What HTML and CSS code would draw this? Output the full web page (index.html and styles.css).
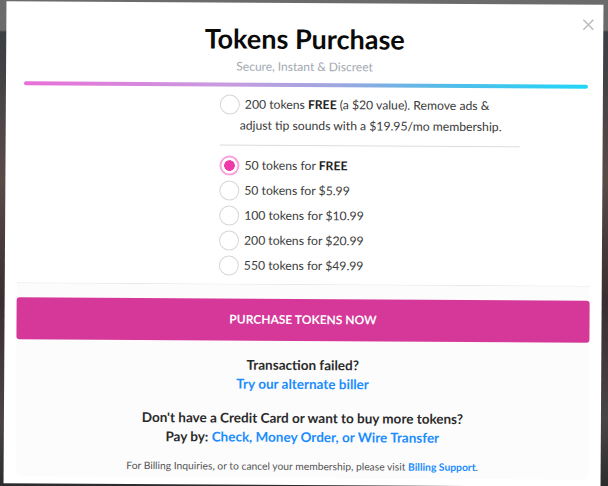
FILE: index.html
```html
<!DOCTYPE html>
<html lang="en">
<head>
<meta charset="utf-8">
<title>Tokens Purchase</title>
<link rel="stylesheet" href="styles.css">
</head>
<body>
<div class="modal">
  <button class="close" aria-label="Close">
    <svg width="12" height="12" viewBox="0 0 12 12"><path d="M1 1L11 11M11 1L1 11" stroke="#bdbdbd" stroke-width="1.6" fill="none"/></svg>
  </button>
  <h1 class="title">Tokens Purchase</h1>
  <p class="subtitle">Secure, Instant &amp; Discreet</p>
  <div class="bar"></div>

  <div class="options">
    <label class="member"><span class="radio"></span><span>200 tokens <b>FREE</b> (a $20 value). Remove ads &amp;</span><br><span>adjust tip sounds with a $19.95/mo membership.</span></label>
    <div class="divider"></div>
    <label class="opt"><span class="radio on"></span><span>50 tokens for <b>FREE</b></span></label>
    <label class="opt"><span class="radio"></span><span>50 tokens for $5.99</span></label>
    <label class="opt"><span class="radio"></span><span>100 tokens for $10.99</span></label>
    <label class="opt"><span class="radio"></span><span>200 tokens for $20.99</span></label>
    <label class="opt"><span class="radio"></span><span>550 tokens for $49.99</span></label>
  </div>

  <div class="panel">
    <button class="buy">PURCHASE TOKENS NOW</button>
    <p class="info">Transaction failed?<br><a href="#">Try our alternate biller</a></p>
    <p class="info">Don't have a Credit Card or want to buy more tokens?<br>Pay by: <a href="#">Check, Money Order, or Wire Transfer</a></p>
    <p class="foot">For Billing Inquiries, or to cancel your membership, please visit <a href="#">Billing Support</a>.</p>
  </div>
</div>
</body>
</html>
```
FILE: styles.css
```css
html, body {
  margin: 0;
  padding: 0;
}
body {
  width: 608px;
  height: 486px;
  overflow: hidden;
  background: linear-gradient(180deg, #6b6b6b 0px, #6b6b6b 30px, #3b3f44 32px, #5a4a48 180px, #3a2e30 300px, #4a4448 420px, #2c2c2e 486px);
  font-family: Lato, "Open Sans", sans-serif;
  color: #333;
}
.modal {
  position: relative;
  box-sizing: border-box;
  width: 597px;
  height: 482px;
  margin: 3px 0 0 5px;
  padding: 16px 12px 0;
  background: #fff;
  transform: rotate(0.35deg);
  transform-origin: 50% 50%;
}
.close {
  position: absolute;
  top: 14px;
  right: 9px;
  padding: 0;
  border: 0;
  background: none;
  line-height: 0;
}
.title {
  margin: 3px 0 0;
  font-size: 27px;
  line-height: 34px;
  font-weight: 700;
  text-align: center;
  color: #0a0a0a;
}
.subtitle {
  margin: 3px 0 0;
  font-size: 12px;
  line-height: 16px;
  text-align: center;
  color: #a3a8b0;
}
.bar {
  height: 4px;
  margin: 8px 3px 0 6px;
  border-radius: 2px;
  background: linear-gradient(90deg, #e96fd8 0%, #c99be0 35%, #9fa6e0 55%, #5ab9e6 72%, #1fd6f9 100%);
}
.options {
  width: 300px;
  margin: 8px 0 0 202px;
  font-size: 12.2px;
  line-height: 20px;
  color: #3a3a3a;
}
.options b {
  color: #222;
}
.member {
  display: block;
  padding-left: 20px;
}
.member .radio {
  margin-left: -20px;
  margin-right: 5px;
}
.radio {
  display: inline-block;
  box-sizing: border-box;
  width: 20px;
  height: 20px;
  border: 1px solid #d6d6d6;
  border-radius: 50%;
  background: #fff;
  vertical-align: middle;
  position: relative;
  top: -1px;
}
.radio.on {
  border: 2px solid #f6a3de;
  background: radial-gradient(circle, #ee3aa9 0, #ee3aa9 5px, #fff 5.6px);
}
.divider {
  height: 1px;
  margin: 9px 0 8px;
  background: #dcdcdc;
}
.opt {
  display: flex;
  align-items: center;
  gap: 5px;
  height: 25px;
}
.opt .radio {
  top: 0;
  flex: none;
}
.panel {
  margin-top: 5px;
  padding: 14px 0 5px;
  border-top: 1px solid #e8e8e8;
  border-radius: 0 0 6px 6px;
  background: #fcfcfc;
  text-align: center;
}
.buy {
  display: block;
  width: 100%;
  height: 42px;
  border: 0;
  border-radius: 3px;
  background: #d6389a;
  color: #fff;
  font-family: inherit;
  font-size: 12px;
  font-weight: 700;
}
.info {
  margin: 15px 0 0;
  font-size: 13.5px;
  line-height: 19px;
  font-weight: 700;
  color: #2a2a2a;
}
.info a, .foot a {
  color: #1a8cff;
  text-decoration: none;
  font-weight: 700;
}
.foot {
  margin: 12px 0 0;
  font-size: 10.3px;
  line-height: 14px;
  color: #555;
}
```
